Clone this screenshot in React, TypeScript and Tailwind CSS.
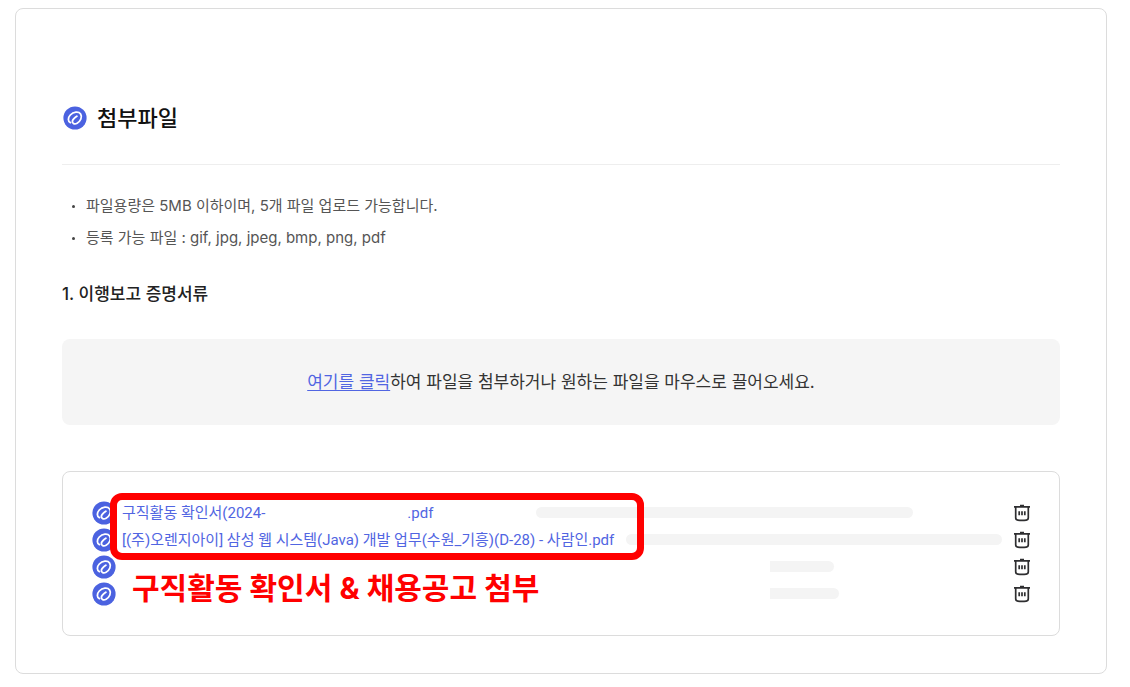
const files = [
  { id: 1, name: "구직활동 확인서(2024-", ext: ".pdf", nameWidth: "w-[402px]", bar: "w-[377px] rounded-full" },
  { id: 2, name: "[(주)오렌지아이] 삼성 웹 시스템(Java) 개발 업무(수원_기흥)(D-28) - 사람인.pdf", nameWidth: "w-[492px]", bar: "w-[376px] rounded-full" },
  { id: 3, name: "", nameWidth: "w-[636px]", bar: "w-16 rounded-r-full" },
  { id: 4, name: "", nameWidth: "w-[636px]", bar: "w-[69px] rounded-r-full" },
];

const notices = [
  "파일용량은 5MB 이하이며, 5개 파일 업로드 가능합니다.",
  "등록 가능 파일 : gif, jpg, jpeg, bmp, png, pdf",
];

function ClipIcon() {
  return (
    <svg viewBox="0 0 24 24" className="size-6 shrink-0" fill="none" aria-hidden="true">
      <circle cx="12" cy="12" r="11.6" fill="#4b62e0" />
      <path
        d="M7.400 16.600C4.800 15.400 4.700 11.800 7.300 9 10.400 5.600 15.600 5 17.600 7.900c2 3.100-.1 7.400-3.500 9.300-2.500 1.400-5 .3-4.700-2.100.2-1.800 2.300-3.300 4.500-4.900"
        stroke="#fff"
        strokeWidth={1.8}
        strokeLinecap="round"
        strokeLinejoin="round"
      />
    </svg>
  );
}

function TrashIcon() {
  return (
    <svg viewBox="0 0 18 18" className="size-[18px]" fill="none" stroke="#2e2e30" strokeWidth={1.7} aria-hidden="true">
      <path d="M1 2.800h16M7 1.500h4" />
      <path d="M2.700 3v10.800q0 2 2 2.300 4.300.7 8.600 0 2-.3 2-2.300V3" />
      <path d="M6.200 7.200v4M9 7.200v4M11.800 7.200v4" />
    </svg>
  );
}

export default function App() {
  return (
    <main className="pt-2 pl-[15px] pr-[23px] pb-3 bg-white font-['Inter','Noto_Sans_CJK_KR',sans-serif] text-[#333]">
      <section className="rounded-lg border border-[#dcdcdc] px-[46px] pt-[91px] pb-[37px]">
        <header className="flex items-center gap-[10px] border-b border-[#eee] px-px pb-7">
          <ClipIcon />
          <h1 className="text-[22px] leading-9 font-medium text-[#111]">첨부파일</h1>
        </header>

        <ul className="mt-[25px] pl-[10px] text-[15px] leading-8 text-[#555]">
          {notices.map((n) => (
            <li key={n} className="flex items-center gap-[11px]">
              <span className="size-[3px] rounded-full bg-[#444]" />
              {n}
            </li>
          ))}
        </ul>

        <h2 className="mt-7 text-[17px] leading-6 font-medium text-[#222]">1. 이행보고 증명서류</h2>

        <div className="mt-[33px] rounded-lg bg-[#f5f5f5] px-6 py-[31px] text-center text-[17px] leading-6">
          <a href="#upload" className="text-[#5165e2] underline underline-offset-2">여기를 클릭</a>
          하여 파일을 첨부하거나 원하는 파일을 마우스로 끌어오세요.
        </div>

        <div className="relative mt-[46px] rounded-lg border border-[#dcdcdc] pl-[29px] pr-7 pt-[27px] pb-7">
          <ul>
            {files.map((f) => (
              <li key={f.id} className="flex h-[27px] items-center">
                <ClipIcon />
                <div
                  className={`ml-[6px] shrink-0 whitespace-nowrap font-['Roboto','Noto_Sans_CJK_KR',sans-serif] text-[15px] leading-6 text-[#5165e2] ${f.nameWidth}`}
                >
                  {f.name && (
                    <a href={`#file-${f.id}`}>
                      {f.name}
                      {f.ext && <span className="ml-[142px]">{f.ext}</span>}
                    </a>
                  )}
                </div>
                <span className={`ml-3 h-[11px] bg-[#f4f4f4] ${f.bar}`} />
                <button type="button" aria-label="삭제" className="ml-auto">
                  <TrashIcon />
                </button>
              </li>
            ))}
          </ul>
          <div className="pointer-events-none absolute top-[21px] left-[47px] h-[67px] w-[534px] rounded-xl border-[7px] border-[#f00]" />
          <p className="absolute top-24 left-[69px] text-[30px] leading-10 font-bold whitespace-nowrap text-[#f00]">
            구직활동 확인서 &amp; 채용공고 첨부
          </p>
        </div>
      </section>
    </main>
  );
}
